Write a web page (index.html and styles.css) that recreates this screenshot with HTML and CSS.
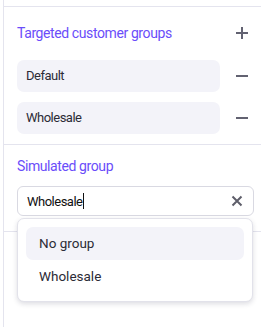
FILE: index.html
```html
<!DOCTYPE html>
<html>
<head>
<meta charset="utf-8">
<link rel="stylesheet" href="styles.css">
</head>
<body>
<div class="panel">
  <div class="topbar"></div>
  <section class="section groups">
    <div class="head">
      <h3 class="title">Targeted customer groups</h3>
      <button class="icon-btn" aria-label="Add">
        <svg width="14" height="14" viewBox="0 0 14 14"><path d="M7 1v12M1 7h12" stroke="currentColor" stroke-width="2" fill="none"/></svg>
      </button>
    </div>
    <div class="row">
      <div class="chip">Default</div>
      <button class="icon-btn" aria-label="Remove">
        <svg width="14" height="14" viewBox="0 0 14 14"><path d="M1 7h12" stroke="currentColor" stroke-width="2" fill="none"/></svg>
      </button>
    </div>
    <div class="row">
      <div class="chip">Wholesale</div>
      <button class="icon-btn" aria-label="Remove">
        <svg width="14" height="14" viewBox="0 0 14 14"><path d="M1 7h12" stroke="currentColor" stroke-width="2" fill="none"/></svg>
      </button>
    </div>
  </section>
  <section class="section simulated">
    <h3 class="title">Simulated group</h3>
    <div class="combo">
      <div class="input"><span class="value">Wholesale</span><span class="caret"></span>
        <svg class="clear" width="12" height="12" viewBox="0 0 12 12"><path d="M1.5 1.5l9 9M10.5 1.5l-9 9" stroke="currentColor" stroke-width="2" fill="none"/></svg>
      </div>
      <div class="menu">
        <div class="option active">No group</div>
        <div class="option">Wholesale</div>
      </div>
    </div>
  </section>
</div>
</body>
</html>
```
FILE: styles.css
```css
* { box-sizing: border-box; }
body {
  margin: 0;
  background: #fff;
  font-family: Roboto, "Noto Sans", sans-serif;
  color: #2b2b36;
}
.panel {
  margin-left: 3px;
  border-left: 1px solid #e4e4ee;
  min-height: 327px;
}
.topbar {
  height: 7px;
  border-bottom: 1px solid #e4e4ee;
}
.section {
  padding: 16px 7px 0 13px;
  border-bottom: 1px solid #e4e4ee;
}
.groups { padding-bottom: 10px; }
.simulated { padding-top: 11px; padding-bottom: 15px; }
.title {
  margin: 0;
  font-size: 14px;
  line-height: 20px;
  font-weight: 400;
  letter-spacing: -0.4px;
  color: #6a4dfa;
}
.head {
  display: flex;
  align-items: center;
  justify-content: space-between;
  height: 20px;
  margin-bottom: 17px;
}
.icon-btn {
  width: 24px;
  height: 24px;
  padding: 0;
  border: 0;
  background: none;
  color: #626271;
  display: flex;
  align-items: center;
  justify-content: center;
}
.row {
  display: flex;
  align-items: center;
  gap: 10px;
  margin-bottom: 10px;
}
.row:last-child { margin-bottom: 0; }
.chip {
  flex: 1;
  height: 32px;
  background: #f3f3f9;
  border-radius: 7px;
  padding-left: 9px;
  font-size: 13px;
  letter-spacing: -0.5px;
  line-height: 32px;
  color: #2b2b36;
}
.combo {
  position: relative;
  margin-top: 10px;
}
.input {
  height: 30px;
  border: 1px solid #d9d9e2;
  border-radius: 6px;
  display: flex;
  align-items: center;
  padding: 0 10px 0 9px;
  font-size: 13px;
  letter-spacing: -0.5px;
  color: #111;
}
.caret {
  width: 1px;
  height: 16px;
  background: #111;
}
.clear {
  margin-left: auto;
  color: #5e5e6a;
}
.menu {
  position: absolute;
  left: 0;
  right: 1px;
  top: 32px;
  background: #fff;
  border: 1px solid #e2e2ea;
  border-radius: 7px;
  box-shadow: 0 2px 5px rgba(30, 30, 60, 0.15);
  padding: 8px;
  z-index: 2;
}
.option {
  height: 33px;
  line-height: 33px;
  padding-left: 13px;
  border-radius: 7px;
  font-size: 13.5px;
  color: #2b2b36;
}
.option.active { background: #f3f3f9; }
```
